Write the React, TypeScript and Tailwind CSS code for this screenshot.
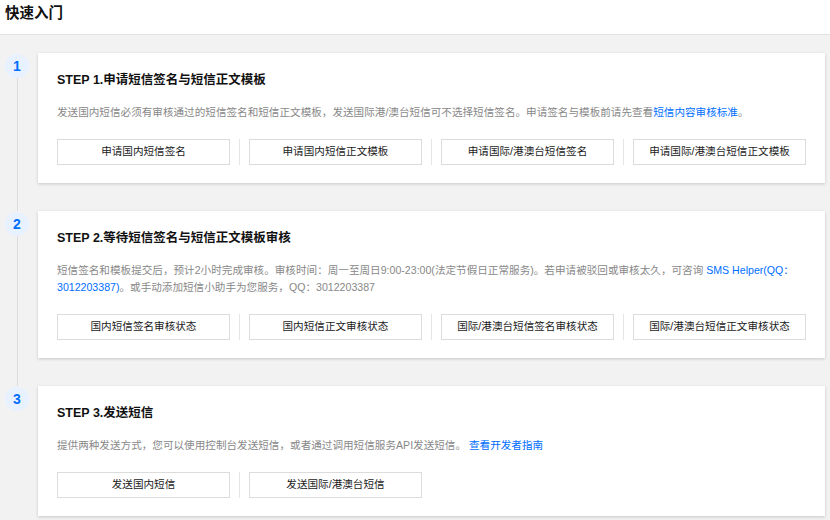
import React from "react";

const font = { fontFamily: '"Liberation Sans", "Noto Sans CJK SC", sans-serif' };

type Step = {
    no: number;
    title: string;
    desc: React.ReactNode;
    buttons: string[];
};

const steps: Step[] = [
    {
        no: 1,
        title: "STEP 1.申请短信签名与短信正文模板",
        desc: (
            <>
                发送国内短信必须有审核通过的短信签名和短信正文模板，发送国际港/澳台短信可不选择短信签名。申请签名与模板前请先查看
                <a className="text-[#006eff]">短信内容审核标准</a>。
            </>
        ),
        buttons: ["申请国内短信签名", "申请国内短信正文模板", "申请国际/港澳台短信签名", "申请国际/港澳台短信正文模板"],
    },
    {
        no: 2,
        title: "STEP 2.等待短信签名与短信正文模板审核",
        desc: (
            <>
                短信签名和模板提交后，预计2小时完成审核。审核时间：周一至周日9:00-23:00(法定节假日正常服务)。若申请被驳回或审核太久，可咨询{" "}
                <a className="text-[#006eff]">
                    SMS Helper(QQ：
                    <br />
                    3012203387)
                </a>
                。或手动添加短信小助手为您服务，QQ：3012203387
            </>
        ),
        buttons: ["国内短信签名审核状态", "国内短信正文审核状态", "国际/港澳台短信签名审核状态", "国际/港澳台短信正文审核状态"],
    },
    {
        no: 3,
        title: "STEP 3.发送短信",
        desc: (
            <>
                提供两种发送方式，您可以使用控制台发送短信，或者通过调用短信服务API发送短信。{" "}
                <a className="text-[#006eff]">查看开发者指南</a>
            </>
        ),
        buttons: ["发送国内短信", "发送国际/港澳台短信"],
    },
];

function StepCard({ step, last }: { step: Step; last: boolean }) {
    return (
        <div className="flex">
            <div className="flex flex-col items-center w-[24px] shrink-0">
                <div className="mt-[1px] w-[24px] h-[24px] rounded-full bg-[#e8f1ff] flex items-center justify-center text-[14px] font-bold text-[#006eff]">
                    {step.no}
                </div>
                {!last && <div className="flex-1 w-px bg-[#dcdcdc]" />}
            </div>
            <div className={`ml-[9px] flex-1 ${last ? "" : "pb-[28px]"}`}>
                <div className="bg-white shadow-[0_1px_3px_rgba(0,0,0,0.18)] pt-[18px] px-[19px] pb-[18px]">
                    <h2 className="h-[18px] leading-[18px] text-[12.5px] font-bold text-[#111]">{step.title}</h2>
                    <p className="mt-[15px] text-[10.6px] leading-[17px] text-[#888]">{step.desc}</p>
                    <div className="mt-[18px] flex items-stretch">
                        {step.buttons.map((b, i) => (
                            <React.Fragment key={b}>
                                {i > 0 && <div className="w-px mx-[9px] bg-[#e5e5e5]" />}
                                <button className="w-[173px] h-[26px] border border-[#dcdcdc] bg-white text-[10.6px] text-[#1a1a1a] whitespace-nowrap">
                                    {b}
                                </button>
                            </React.Fragment>
                        ))}
                    </div>
                </div>
            </div>
        </div>
    );
}

export default function App() {
    return (
        <div className="w-[830px] h-[520px] overflow-hidden bg-[#f2f2f2]" style={font}>
            <div className="h-[35px] bg-white border-b border-[#e3e3e3] flex items-center pl-[5px] pb-[7px]">
                <h1 className="text-[14.5px] font-bold text-[#111]">快速入门</h1>
            </div>
            <div className="pt-[18px] pl-[5px] pr-[5px]">
                {steps.map((s, i) => (
                    <StepCard key={s.no} step={s} last={i === steps.length - 1} />
                ))}
            </div>
        </div>
    );
}
